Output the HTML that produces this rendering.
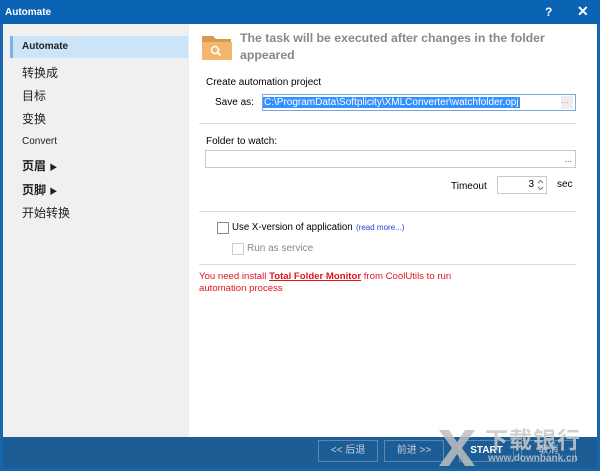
<!DOCTYPE html>
<html><head><meta charset="utf-8"><style>
*{margin:0;padding:0;box-sizing:border-box}
body{width:600px;height:471px;background:#1766ad;font-family:"Liberation Sans","Noto Sans CJK SC",sans-serif;font-size:10px;color:#000;position:relative;overflow:hidden}
.a{position:absolute;white-space:nowrap}
.title{left:0;top:0;width:600px;height:24px;background:#0a63b3;color:#fff;font-weight:bold;font-size:10px}
.main{left:3px;top:24px;width:594px;height:444px;background:#fff}
.side{left:3px;top:24px;width:186px;height:413px;background:#f0f0f0}
.item{left:22px;font-size:12px;color:#222}
.hr{height:1px;background:#ddd}
.box{border:1px solid #c8c8c8;background:#fff}
.btn{border:1px solid #5b88b3;color:#ccd;text-align:center;line-height:20px;height:22px;font-size:10px}
.cb{width:12px;height:12px;border:1px solid #888;background:#fff}
</style></head><body>
<div class="a title"><span class="a" style="left:5px;top:7px">Automate</span><span class="a" style="left:545px;top:5px;font-size:12px">?</span><span class="a" style="left:577px;top:3px;font-size:14px">✕</span></div>
<div class="a main"></div>
<div class="a side"></div>
<div class="a" style="left:10px;top:36px;width:178px;height:22px;background:#cce4f7"></div>
<div class="a" style="left:10px;top:36px;width:3px;height:22px;background:#7ab3e6"></div>
<div class="a item" style="top:41px;font-weight:bold;font-size:10px">Automate</div>
<div class="a item" style="top:64px">转换成</div>
<div class="a item" style="top:87px">目标</div>
<div class="a item" style="top:110px">变换</div>
<div class="a item" style="top:136px;font-size:10px">Convert</div>
<div class="a item" style="top:157px;font-weight:bold">页眉 <span style="font-size:8px">▶</span></div>
<div class="a item" style="top:181px;font-weight:bold">页脚 <span style="font-size:8px">▶</span></div>
<div class="a item" style="top:204px">开始转换</div>

<svg class="a" style="left:201px;top:32px" width="32" height="30"><path d="M1 4h11l3 3h15v21H1z" fill="#d99a4e"/><path d="M1 10h30v18H1z" fill="#f2b76c"/><circle cx="14" cy="18" r="3.5" fill="none" stroke="#fff" stroke-width="1.6"/><path d="M16.5 20.5l3 3" stroke="#fff" stroke-width="1.8"/></svg>
<div class="a" style="left:240px;top:30px;font-size:12.3px;font-weight:bold;color:#888;line-height:17px">The task will be executed after changes in the folder<br>appeared</div>
<div class="a" style="left:206px;top:77px">Create automation project</div>
<div class="a" style="left:215px;top:97px">Save as:</div>
<div class="a box" style="left:262px;top:94px;width:314px;height:17px;border-color:#7aa7d6"><span style="background:#3390ff;color:#fff;padding:0 1px;line-height:15px">C:\ProgramData\Softplicity\XMLConverter\watchfolder.opj</span><span class="a" style="right:2px;top:1px;width:12px;height:13px;background:#eee;font-size:8px;color:#999">…</span></div>
<div class="a hr" style="left:199px;top:123px;width:377px"></div>
<div class="a" style="left:206px;top:136px">Folder to watch:</div>
<div class="a box" style="left:205px;top:150px;width:371px;height:18px"><span class="a" style="right:3px;top:3px;font-size:9px;color:#555">...</span></div>
<div class="a" style="left:451px;top:181px">Timeout</div>
<div class="a box" style="left:497px;top:176px;width:50px;height:18px;text-align:right;padding-right:12px;line-height:16px">3<svg class="a" style="right:2px;top:2px" width="7" height="12"><path d="M1 4l2.5-2.5L6 4M1 8l2.5 2.5L6 8" fill="none" stroke="#777"/></svg></div>
<div class="a" style="left:557px;top:179px;font-size:10px">sec</div>
<div class="a hr" style="left:199px;top:211px;width:377px"></div>
<div class="a cb" style="left:217px;top:222px"></div>
<div class="a" style="left:232px;top:222px;font-size:9.7px">Use X-version of application</div>
<div class="a" style="left:356px;top:223px;font-size:8px;color:#2a3dd0">(read more...)</div>
<div class="a cb" style="left:232px;top:243px;border-color:#ccc"></div>
<div class="a" style="left:247px;top:243px;color:#888">Run as service</div>
<div class="a hr" style="left:199px;top:264px;width:377px"></div>
<div class="a" style="left:199px;top:271px;color:#e0151b;font-size:9.6px;line-height:12px">You need install <b style="text-decoration:underline">Total Folder Monitor</b> from CoolUtils to run<br>automation process</div>

<div class="a" style="left:3px;top:437px;width:594px;height:31px;background:#1b5d94"></div>
<div class="a btn" style="left:318px;top:440px;width:60px">&lt;&lt; 后退</div>
<div class="a btn" style="left:384px;top:440px;width:60px">前进 &gt;&gt;</div>
<div class="a btn" style="left:459px;top:440px;width:55px;font-weight:bold;color:#fff">START</div>
<div class="a btn" style="left:521px;top:440px;width:55px">取消</div>
<svg class="a" style="left:437px;top:428px" width="40" height="40"><path d="M2 2h10l8 12 8-12h10L25 20l13 18H28l-8-12-8 12H2l13-18z" fill="rgba(190,190,190,.85)"/></svg>
<div class="a" style="left:485px;top:427px;font-size:23px;line-height:26px;color:rgba(200,200,200,.85);font-weight:bold;letter-spacing:1px">下载银行</div>
<div class="a" style="left:488px;top:453px;font-size:10px;color:rgba(200,200,200,.85);font-weight:bold">www.downbank.cn</div>
</body></html>
